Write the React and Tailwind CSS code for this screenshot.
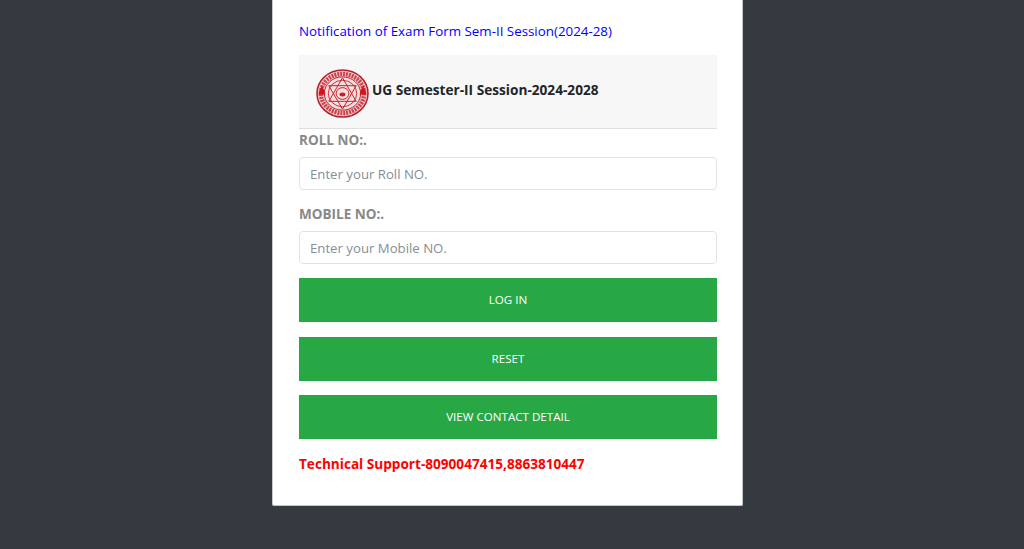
import React from 'react';

function Logo() {
    return (
        <svg width="53" height="49" viewBox="0 0 54 50" className="shrink-0 mt-[4px]">
            <ellipse cx="27" cy="25" rx="26" ry="24" fill="#f0d0cf" stroke="#b81f2c" strokeWidth="1.6" />
            <ellipse cx="27" cy="25" rx="22" ry="20" fill="none" stroke="#c42a38" strokeWidth="4.500" strokeDasharray="2 1" opacity="0.85" />
            <ellipse cx="27" cy="25" rx="18.500" ry="17" fill="#f5dedc" stroke="#b81f2c" strokeWidth="1" />
            <ellipse cx="27" cy="25" rx="14.500" ry="13.500" fill="none" stroke="#c4202c" strokeWidth="0.900" />
            <path d="M27 9 L41 33 L13 33 Z" fill="none" stroke="#c4202c" strokeWidth="1" />
            <path d="M27 41 L41 17 L13 17 Z" fill="none" stroke="#c4202c" strokeWidth="1" />
            <ellipse cx="27" cy="25" rx="6.500" ry="6" fill="none" stroke="#c4202c" strokeWidth="1" />
            <ellipse cx="27" cy="26" rx="3" ry="2" fill="#c4202c" />
            <path d="M6 17 L8.500 22 L9.500 26 L2.500 26 L3.500 22 Z" fill="#d6121f" />
            <path d="M48 17 L50.500 22 L51.500 26 L44.500 26 L45.500 22 Z" fill="#d6121f" />
        </svg>
    );
}

function Field({ label, placeholder }) {
    return (
        <div>
            <label className="block h-[24px] text-[13.500px] leading-[22px] font-bold text-[#888888]">{label}</label>
            <input
                type="text"
                placeholder={placeholder}
                className="mt-[4px] block w-full h-[33px] px-[10px] bg-white border border-[#dfe2e6] rounded-[4px] text-[13.200px] outline-none placeholder:text-[#868e96]"
            />
        </div>
    );
}

function GreenButton({ children }) {
    return (
        <button className="block w-full h-[44px] bg-[#28a745] text-white text-[11.600px] text-center">
            {children}
        </button>
    );
}

export default function App() {
    return (
        <div className="h-[549px] overflow-hidden bg-[#343a40] font-['Open_Sans','Noto_Sans',sans-serif]">
            <div className="ml-[272px] w-[471px] h-[506px] bg-white pl-[26px] pr-[25px] pt-[22px] border-x border-b border-[#c4c6c8] rounded-b-[2px]">
                <a href="#" className="block h-[33px] text-[13.350px] leading-[19px] text-[#0000ff]">
                    Notification of Exam Form Sem-II Session(2024-28)
                </a>
                <div className="flex items-center h-[74px] pl-[17px] bg-[#f7f7f7] border-b border-[#dfdfdf]">
                    <Logo />
                    <span className="ml-[3px] -mt-[2px] text-[13.650px] font-bold text-[#212529]">UG Semester-II Session-2024-2028</span>
                </div>
                <div className="flex flex-col gap-[13px]">
                    <Field label="ROLL NO:." placeholder="Enter your Roll NO." />
                    <Field label="MOBILE NO:." placeholder="Enter your Mobile NO." />
                </div>
                <div className="mt-[14px] flex flex-col gap-[14.500px]">
                    <GreenButton>LOG IN</GreenButton>
                    <GreenButton>RESET</GreenButton>
                    <GreenButton>VIEW CONTACT DETAIL</GreenButton>
                </div>
                <p className="mt-[14px] text-[13.600px] leading-[21px] font-bold text-[#ff0000]">Technical Support-8090047415,8863810447</p>
            </div>
        </div>
    );
}
